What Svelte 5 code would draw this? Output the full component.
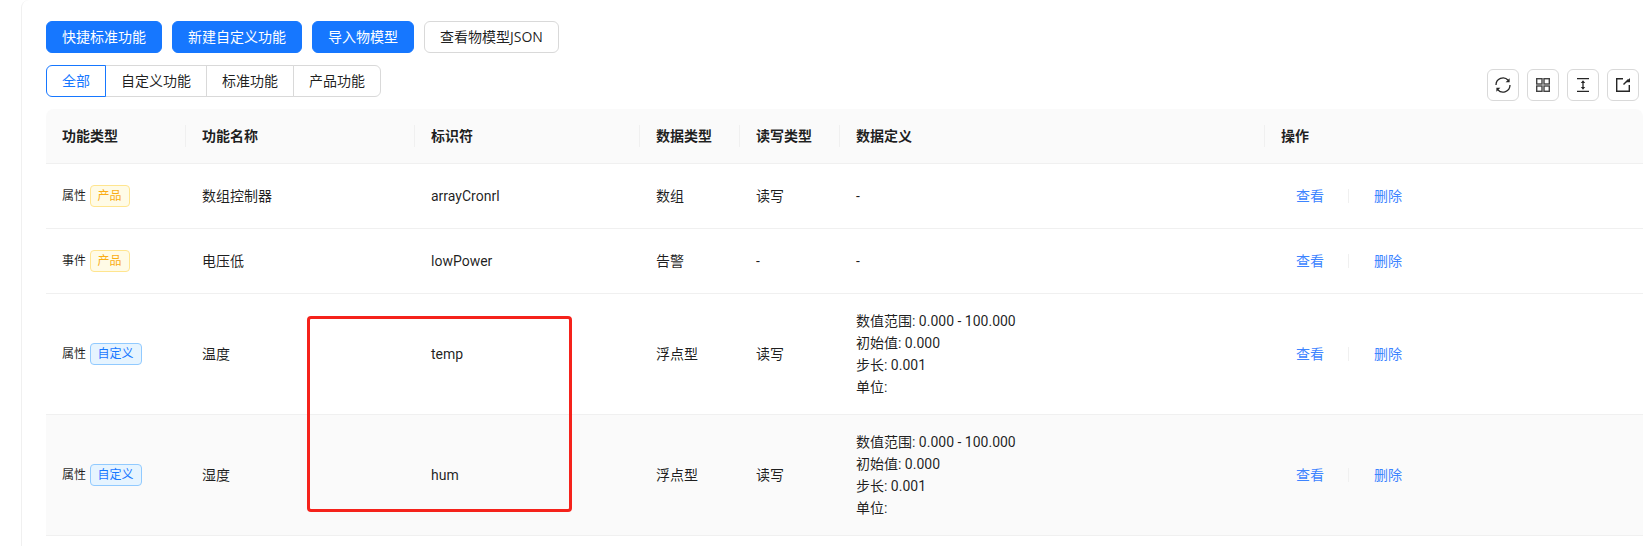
<script lang="ts">
  const actions = ["快捷标准功能", "新建自定义功能", "导入物模型"];
  const filters = ["全部", "自定义功能", "标准功能", "产品功能"];
  const columns = ["功能类型", "功能名称", "标识符", "数据类型", "读写类型", "数据定义", "操作"];
  const floatSpec = ["数值范围: 0.000 - 100.000", "初始值: 0.000", "步长: 0.001", "单位:"];
  const rows = [
    { type: "属性", tag: "产品", name: "数组控制器", id: "arrayCronrl", data: "数组", rw: "读写", spec: ["-"] },
    { type: "事件", tag: "产品", name: "电压低", id: "lowPower", data: "告警", rw: "-", spec: ["-"] },
    { type: "属性", tag: "自定义", name: "温度", id: "temp", data: "浮点型", rw: "读写", spec: floatSpec },
    { type: "属性", tag: "自定义", name: "湿度", id: "hum", data: "浮点型", rw: "读写", spec: floatSpec },
  ];
</script>

<div class="page">
  <div class="actions">
    {#each actions as label}
      <button class="btn primary">{label}</button>
    {/each}
    <button class="btn json">查看物模型JSON</button>
  </div>

  <div class="bar">
    <div class="segments">
      {#each filters as label, i}
        <button class="seg" class:active={i === 0}>{label}</button>
      {/each}
    </div>
    <div class="tools">
      <button class="tool" aria-label="刷新">
        <svg viewBox="0 0 16 16" width="16" height="16" fill="none" stroke="#262626" stroke-width="1.3">
          <path d="M1 8a7 7 0 0 1 12.2-4.7" />
          <path d="M15 8a7 7 0 0 1-12.2 4.7" />
          <path d="M14.6 1.2v4h-4z" fill="#262626" stroke="none" />
          <path d="M1.4 14.8v-4h4z" fill="#262626" stroke="none" />
        </svg>
      </button>
      <button class="tool" aria-label="视图">
        <svg viewBox="0 0 16 16" width="16" height="16" fill="none" stroke="#434343" stroke-width="1.4">
          <rect x="1.7" y="1.7" width="5.3" height="5.3" />
          <rect x="9" y="1.7" width="5.3" height="5.3" />
          <rect x="1.7" y="9" width="5.3" height="5.3" />
          <rect x="9" y="9" width="5.3" height="5.3" />
        </svg>
      </button>
      <button class="tool" aria-label="行高">
        <svg viewBox="0 0 16 16" width="16" height="16" fill="none" stroke="#262626" stroke-width="1.3">
          <path d="M2 1.6h12M2 14.4h12M8 5v6" />
          <path d="M8 3.2l2.2 2.8H5.8zM8 12.8l2.2-2.8H5.8z" fill="#262626" stroke="none" />
        </svg>
      </button>
      <button class="tool" aria-label="导出">
        <svg viewBox="0 0 16 16" width="16" height="16" fill="none" stroke="#262626" stroke-width="1.4">
          <path d="M8 1.7H1.7v12.6h12.6V8" />
          <path d="M8.5 7.5L13.5 2.5" />
          <path d="M15 1v4.2h-4.2z" fill="#262626" stroke="none" />
        </svg>
      </button>
    </div>
  </div>

  <table>
    <colgroup>
      <col style="width: 140px" />
      <col style="width: 229px" />
      <col style="width: 225px" />
      <col style="width: 100px" />
      <col style="width: 100px" />
      <col style="width: 425px" />
      <col />
    </colgroup>
    <thead>
      <tr>
        {#each columns as col}
          <th>{col}</th>
        {/each}
      </tr>
    </thead>
    <tbody>
      {#each rows as row, i}
        <tr class:striped={i === 3}>
          <td>
            <span class="kind">{row.type}</span>
            <span class="tag" class:custom={row.tag === "自定义"}>{row.tag}</span>
          </td>
          <td>{row.name}</td>
          <td>{row.id}</td>
          <td>{row.data}</td>
          <td>{row.rw}</td>
          <td>
            {#each row.spec as line}
              <div>{line}</div>
            {/each}
          </td>
          <td>
            <div class="ops">
              <button class="link">查看</button>
              <span class="sep"></span>
              <button class="link">删除</button>
            </div>
          </td>
        </tr>
      {/each}
    </tbody>
  </table>

  <div class="callout"></div>
</div>

<style>
  :global(body) {
    margin: 0;
    background: #fff;
    overflow: hidden;
  }
  .page {
    position: relative;
    box-sizing: border-box;
    height: 546px;
    margin-left: 21px;
    margin-right: 5px;
    padding: 21px 0 0 24px;
    border-left: 1px solid #f0f0f0;
    border-top-left-radius: 8px;
    font-family: Roboto, "Noto Sans CJK SC", sans-serif;
    font-size: 14px;
    line-height: 22px;
    color: rgba(0, 0, 0, 0.88);
  }
  button {
    font: inherit;
    cursor: pointer;
  }
  .actions {
    display: flex;
    gap: 10px;
  }
  .btn {
    height: 32px;
    padding: 0 15px;
    border: 1px solid #d9d9d9;
    border-radius: 6px;
    background: #fff;
    color: rgba(0, 0, 0, 0.88);
  }
  .btn.json {
    font-family: "Open Sans", "Noto Sans CJK SC", sans-serif;
  }
  .btn.primary {
    border-color: #1677ff;
    background: #1677ff;
    color: #fff;
  }
  .bar {
    display: flex;
    justify-content: space-between;
    margin-top: 12px;
    padding-right: 4px;
  }
  .segments {
    display: flex;
  }
  .seg {
    height: 32px;
    padding: 0 15px;
    margin-left: -1px;
    border: 1px solid #d9d9d9;
    background: #fff;
    color: rgba(0, 0, 0, 0.88);
  }
  .seg:first-child {
    margin-left: 0;
    border-radius: 6px 0 0 6px;
  }
  .seg:last-child {
    border-radius: 0 6px 6px 0;
  }
  .seg.active {
    position: relative;
    border-color: #1677ff;
    color: #1677ff;
  }
  .tools {
    display: flex;
    gap: 8px;
    margin-top: 4px;
  }
  .tool {
    display: grid;
    place-items: center;
    width: 32px;
    height: 32px;
    padding: 0;
    border: 1px solid #d9d9d9;
    border-radius: 6px;
    background: #fff;
  }
  table {
    width: 100%;
    margin-top: 8px;
    border-collapse: separate;
    border-spacing: 0;
    table-layout: fixed;
  }
  th {
    position: relative;
    height: 55px;
    padding: 0 16px;
    box-sizing: border-box;
    border-bottom: 1px solid #f0f0f0;
    background: #fafafa;
    font-weight: 600;
    text-align: left;
  }
  th:first-child {
    border-top-left-radius: 8px;
  }
  th:last-child {
    border-top-right-radius: 8px;
  }
  th:not(:last-child)::before {
    content: "";
    position: absolute;
    top: 50%;
    right: 0;
    width: 1px;
    height: 22px;
    transform: translateY(-50%);
    background: #f0f0f0;
  }
  td {
    box-sizing: border-box;
    height: 65px;
    padding: 16px;
    border-bottom: 1px solid #f0f0f0;
  }
  .striped td {
    background: #fafafa;
  }
  .kind {
    font-size: 12px;
    vertical-align: 2px;
  }
  .tag {
    display: inline-block;
    box-sizing: border-box;
    height: 22px;
    padding: 0 7px;
    border: 1px solid #ffe58f;
    border-radius: 4px;
    background: #fffbe6;
    color: #faad14;
    font-size: 12px;
    line-height: 20px;
    vertical-align: top;
  }
  .tag.custom {
    border-color: #91caff;
    background: #e6f4ff;
    color: #1677ff;
  }
  .ops {
    display: flex;
    align-items: center;
  }
  .link {
    height: 22px;
    padding: 0 15px;
    border: 0;
    background: none;
    color: #3d84ff;
  }
  .sep {
    width: 1px;
    height: 14px;
    margin: 0 10px 0 9px;
    background: #f0f0f0;
  }
  .callout {
    position: absolute;
    left: 285px;
    top: 316px;
    width: 265px;
    height: 196px;
    box-sizing: border-box;
    border: 3px solid #f5221b;
    border-radius: 4px;
  }
</style>
